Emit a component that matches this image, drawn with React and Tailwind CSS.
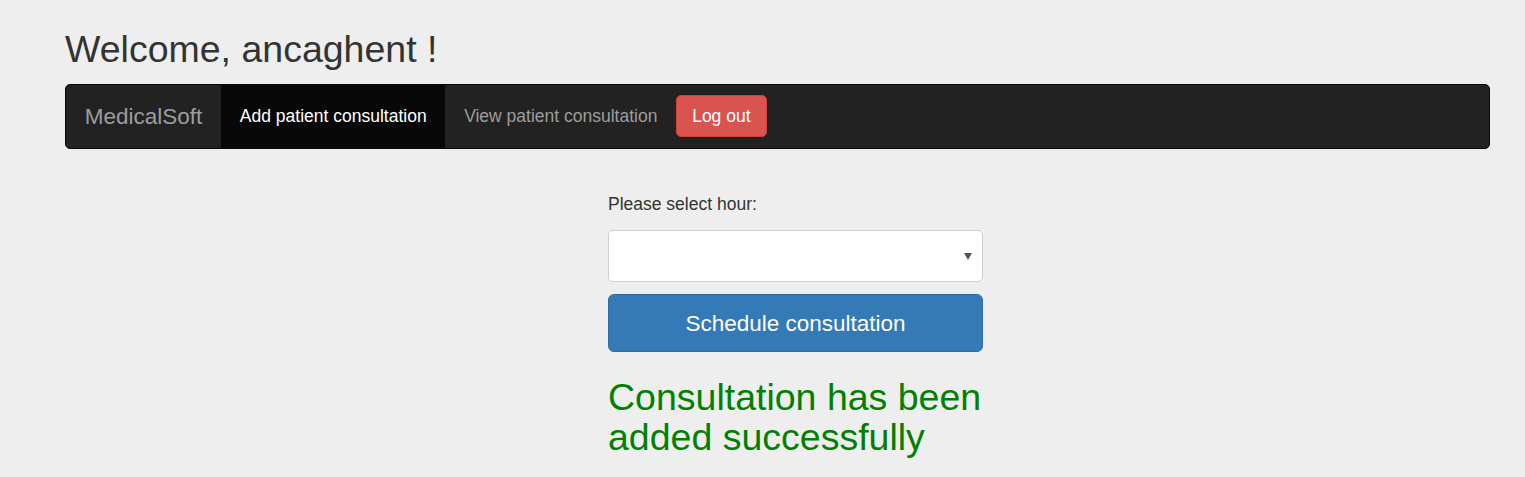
export default function App() {
  return (
    <div
      className="min-h-[477px] w-full bg-[#eeeeee] text-[#333333]"
      style={{ fontFamily: '"Liberation Sans", Arial, sans-serif' }}
    >
      <div className="pl-[65px] pr-[35px]">
        {/* heading */}
        <h2 className="pt-[29px] text-[37.5px] leading-[41.25px] font-normal mb-[13.75px]">
          Welcome, ancaghent !
        </h2>

        {/* navbar */}
        <nav className="flex h-[65px] items-stretch rounded-[5px] border border-[#080808] bg-[#222222] px-0 text-[17.5px] leading-[25px]">
          <a className="flex items-center px-[18.75px] text-[22.5px] leading-[25px] text-[#9d9d9d]">
            MedicalSoft
          </a>
          <a className="flex items-center bg-[#080808] px-[18.75px] text-white">
            Add patient consultation
          </a>
          <a className="flex items-center px-[18.75px] text-[#9d9d9d]">
            View patient consultation
          </a>
          <div className="flex items-start pt-[10px]">
            <button className="h-[42px] rounded-[5px] border border-[#d43f3a] bg-[#d9534f] px-[15px] text-[17.5px] text-white">
              Log out
            </button>
          </div>
        </nav>
      </div>

      {/* form */}
      <div className="ml-[608px] w-[375px] pt-[43.4px]">
        <label className="block text-[17.5px] leading-[25px] text-[#333333]">
          Please select hour:
        </label>
        <div className="relative mt-[12.6px] h-[52px] rounded-[5px] border border-[#cccccc] bg-white">
          <svg
            className="absolute right-[10px] top-[22px]"
            width="8"
            height="7"
            viewBox="0 0 8 7"
          >
            <path d="M0 0 L8 0 L4 7 Z" fill="#555555" />
          </svg>
        </div>
        <button className="mt-[12.3px] flex h-[57.5px] w-full items-center justify-center rounded-[6px] border border-[#2e6da4] bg-[#337ab7] text-[22.5px] leading-[25px] text-white">
          Schedule consultation
        </button>
        <p className="mt-[25.5px] text-[37.5px] leading-[40px] text-[#008000]">
          Consultation has been added successfully
        </p>
      </div>
    </div>
  );
}
